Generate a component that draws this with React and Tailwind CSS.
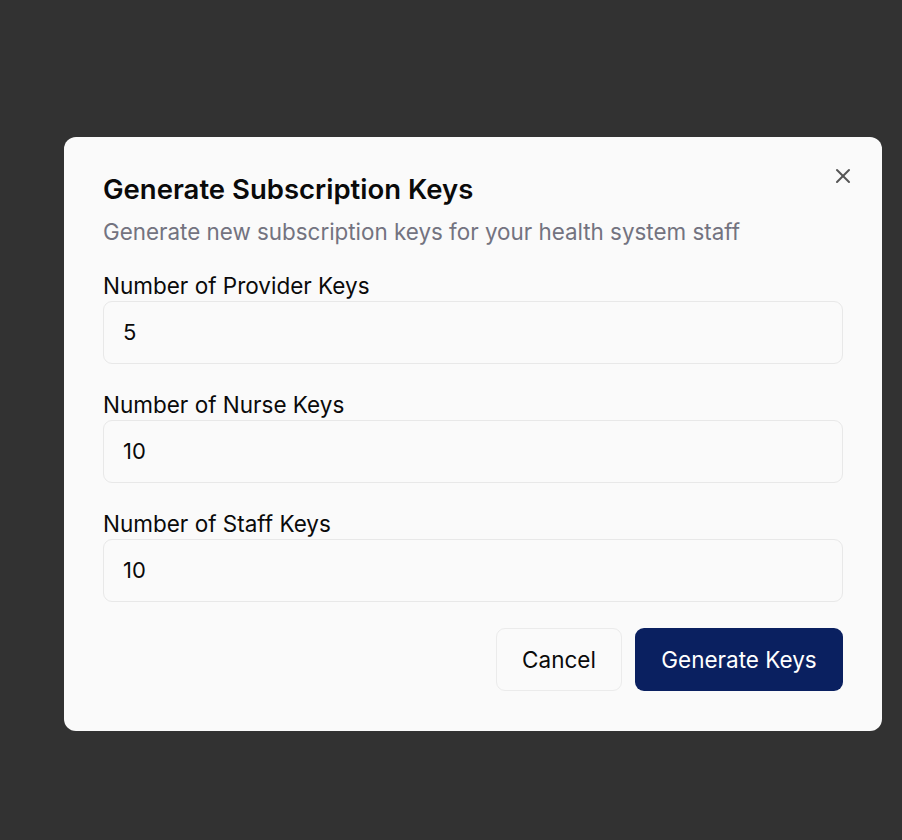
import React from "react";

function XIcon() {
  return (
    <svg width="24" height="24" viewBox="0 0 24 24" fill="none" stroke="currentColor" strokeWidth="2" strokeLinecap="round" strokeLinejoin="round">
      <path d="M18 6 6 18" />
      <path d="m6 6 12 12" />
    </svg>
  );
}

function Field({ label, value }) {
  return (
    <div className="flex flex-col">
      <label className="text-[22.5px] leading-[21px] font-normal text-[#0a0a0a] mb-[4.5px] -mt-[1px] pb-[1px]">{label}</label>
      <div className="h-[63px] rounded-[9px] border border-[#e8e8e8] bg-[#fafafa] flex items-center px-[19px] text-[22px] text-[#0a0a0a]">
        {value}
      </div>
    </div>
  );
}

export default function App() {
  return (
    <div className="min-h-[840px] w-full bg-[#323232] flex" style={{ fontFamily: "Inter, 'Noto Sans', sans-serif" }}>
      <div className="ml-[64px] mt-[137px] w-[818px] h-[594px] rounded-[12px] bg-[#fafafa] relative px-[39px] pt-[39px] pb-[40px] flex flex-col">
        <button className="absolute right-[27px] top-[27px] text-[#555]">
          <XIcon />
        </button>
        <h2 className="text-[27.5px] leading-[27px] font-semibold text-[#0a0a0a]">Generate Subscription Keys</h2>
        <p className="mt-[14px] text-[22.4px] leading-[30px] text-[#737380]">Generate new subscription keys for your health system staff</p>
        <div className="mt-[28.5px] flex flex-col gap-[30.5px]">
          <Field label="Number of Provider Keys" value="5" />
          <Field label="Number of Nurse Keys" value="10" />
          <Field label="Number of Staff Keys" value="10" />
        </div>
        <div className="mt-[26px] flex justify-end gap-[13px]">
          <button className="h-[63px] w-[126px] rounded-[9px] border border-[#ebebeb] bg-[#fafafa] text-[22.5px] font-normal text-[#0a0a0a]">Cancel</button>
          <button className="h-[63px] w-[208px] rounded-[9px] bg-[#0a2060] text-[22.5px] font-normal text-white">Generate Keys</button>
        </div>
      </div>
    </div>
  );
}
